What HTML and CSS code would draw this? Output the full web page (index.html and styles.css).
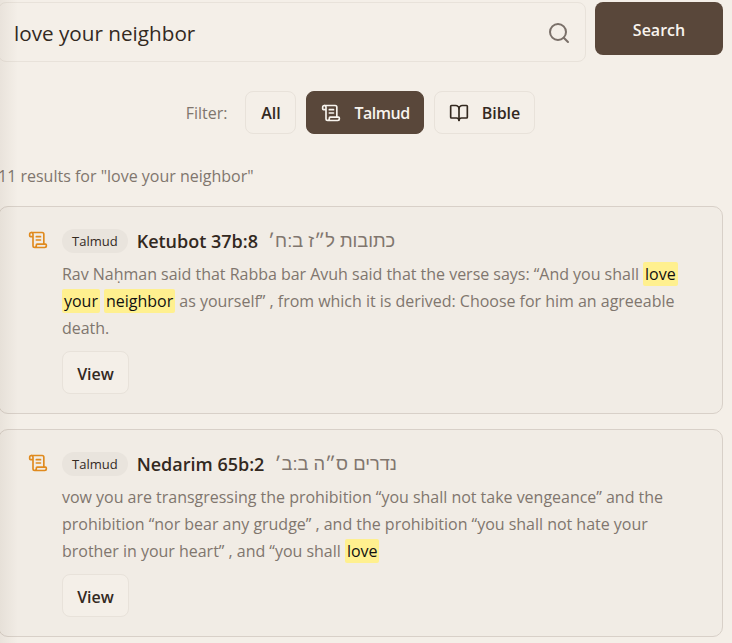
FILE: index.html
```html
<!DOCTYPE html>
<html>
    <head>
        <title>Search</title>
        <link rel="stylesheet" href="styles.css">
    </head>
    <body>
        <div class="edgeShade"></div>
        <main class="page">
            <form class="searchRow">
                <div class="searchBox">
                    <span class="searchText">love your neighbor</span>
                    <svg class="searchIcon" width="24" height="24" viewBox="0 0 24 24" fill="none" stroke="currentColor" stroke-width="2" stroke-linecap="round"><circle cx="11" cy="11" r="8"/><path d="m21 21-4.3-4.3"/></svg>
                </div>
                <button type="button" class="searchBtn">Search</button>
            </form>

            <div class="filterRow">
                <span class="filterLabel">Filter:</span>
                <button type="button" class="filterBtn wide">All</button>
                <button type="button" class="filterBtn active">
                    <svg width="20" height="20" viewBox="0 0 24 24" fill="none" stroke="currentColor" stroke-width="2" stroke-linecap="round" stroke-linejoin="round"><path d="M15 12h-5"/><path d="M15 8h-5"/><path d="M19 17V5a2 2 0 0 0-2-2H4"/><path d="M8 21h12a2 2 0 0 0 2-2v-1a1 1 0 0 0-1-1H11a1 1 0 0 0-1 1v1a2 2 0 1 1-4 0V5a2 2 0 1 0-4 0v2a1 1 0 0 0 1 1h3"/></svg>
                    Talmud
                </button>
                <button type="button" class="filterBtn">
                    <svg width="20" height="20" viewBox="0 0 24 24" fill="none" stroke="currentColor" stroke-width="2" stroke-linecap="round" stroke-linejoin="round"><path d="M12 7v14"/><path d="M3 18a1 1 0 0 1-1-1V4a1 1 0 0 1 1-1h5a4 4 0 0 1 4 4 4 4 0 0 1 4-4h5a1 1 0 0 1 1 1v13a1 1 0 0 1-1 1h-6a3 3 0 0 0-3 3 3 3 0 0 0-3-3z"/></svg>
                    Bible
                </button>
            </div>

            <p class="resultCount">11 results for "love your neighbor"</p>

            <article class="card">
                <svg class="cardIcon" width="20" height="20" viewBox="0 0 24 24" fill="none" stroke="currentColor" stroke-width="2" stroke-linecap="round" stroke-linejoin="round"><path d="M15 12h-5"/><path d="M15 8h-5"/><path d="M19 17V5a2 2 0 0 0-2-2H4"/><path d="M8 21h12a2 2 0 0 0 2-2v-1a1 1 0 0 0-1-1H11a1 1 0 0 0-1 1v1a2 2 0 1 1-4 0V5a2 2 0 1 0-4 0v2a1 1 0 0 0 1 1h3"/></svg>
                <div class="cardBody">
                    <div class="cardHead">
                        <span class="tag">Talmud</span>
                        <h3 class="ref">Ketubot 37b:8</h3>
                        <span class="refHe" dir="rtl">כתובות ל״ז ב:ח׳</span>
                    </div>
                    <p class="snippet">Rav Naḥman said that Rabba bar Avuh said that the verse says: “And you shall <mark>love</mark> <mark>your</mark> <mark>neighbor</mark> as yourself” , from which it is derived: Choose for him an agreeable death.</p>
                    <button type="button" class="viewBtn">View</button>
                </div>
            </article>

            <article class="card">
                <svg class="cardIcon" width="20" height="20" viewBox="0 0 24 24" fill="none" stroke="currentColor" stroke-width="2" stroke-linecap="round" stroke-linejoin="round"><path d="M15 12h-5"/><path d="M15 8h-5"/><path d="M19 17V5a2 2 0 0 0-2-2H4"/><path d="M8 21h12a2 2 0 0 0 2-2v-1a1 1 0 0 0-1-1H11a1 1 0 0 0-1 1v1a2 2 0 1 1-4 0V5a2 2 0 1 0-4 0v2a1 1 0 0 0 1 1h3"/></svg>
                <div class="cardBody">
                    <div class="cardHead">
                        <span class="tag">Talmud</span>
                        <h3 class="ref">Nedarim 65b:2</h3>
                        <span class="refHe" dir="rtl">נדרים ס״ה ב:ב׳</span>
                    </div>
                    <p class="snippet">vow you are transgressing the prohibition “you shall not take vengeance” and the prohibition “nor bear any grudge” , and the prohibition “you shall not hate your brother in your heart” , and “you shall <mark>love</mark></p>
                    <button type="button" class="viewBtn">View</button>
                </div>
            </article>
        </main>
    </body>
</html>
```

FILE: styles.css
```css
html, body {
    margin: 0;
    height: 643px;
    overflow: hidden;
}
body {
    background-color: #f4efe8;
    color: #33291f;
    font-family: "Open Sans", "Noto Sans", sans-serif;
}
button {
    font-family: inherit;
    cursor: pointer;
}
.edgeShade {
    position: absolute;
    top: 0;
    left: 0;
    width: 18px;
    height: 643px;
    pointer-events: none;
    z-index: 2;
    background-image: linear-gradient(to right, rgba(90, 70, 50, 0.07), rgba(90, 70, 50, 0));
}
.page {
    margin-left: -2px;
    margin-right: 9px;
    padding-top: 2px;
}
.searchRow {
    display: flex;
    align-items: flex-start;
    gap: 9px;
}
.searchBox {
    flex: 1;
    height: 60px;
    box-sizing: border-box;
    display: flex;
    align-items: center;
    justify-content: space-between;
    padding: 1px 14px 0 15px;
    border: 1px solid #e8e2da;
    border-radius: 8px;
}
.searchText {
    font-size: 20.7px;
}
.searchIcon {
    color: #7a7069;
}
.searchBtn {
    width: 128px;
    height: 53px;
    padding-top: 3px;
    border: none;
    border-radius: 8px;
    background-color: #59473a;
    color: #f8f4ee;
    font-size: 16px;
    font-weight: 600;
}
.filterRow {
    display: flex;
    align-items: center;
    justify-content: center;
    gap: 10px;
    margin-top: 29px;
}
.filterLabel {
    margin-right: 8px;
    color: #80766e;
    font-size: 16px;
}
.filterBtn {
    display: flex;
    align-items: center;
    gap: 13px;
    height: 43px;
    box-sizing: border-box;
    padding: 0 14px;
    border: 1px solid #e8e2da;
    border-radius: 8px;
    background: transparent;
    color: #33291f;
    font-size: 16px;
    font-weight: 600;
}
.filterBtn.wide {
    width: 51px;
    justify-content: center;
    padding: 0;
}
.filterBtn.active {
    padding-right: 13px;
    border-color: #59473a;
    background-color: #59473a;
    color: #f8f4ee;
    letter-spacing: -0.5px;
}
.resultCount {
    margin: 31px 0 19px;
    color: #80766e;
    font-size: 16px;
    line-height: 22px;
}
.card {
    display: flex;
    gap: 14px;
    height: 208px;
    box-sizing: border-box;
    margin-bottom: 15px;
    padding: 22px 20px 0 29px;
    border: 1px solid #d8d0c8;
    border-radius: 10px;
    background-color: #f1ece5;
}
.cardIcon {
    flex: none;
    margin-top: 1px;
    color: #e08a1e;
}
.cardBody {
    flex: 1;
}
.cardHead {
    display: flex;
    align-items: center;
    gap: 9px;
    height: 24px;
}
.tag {
    padding: 1px 10px;
    border-radius: 12px;
    background-color: #e9e4dd;
    font-size: 13px;
    line-height: 22px;
}
.ref {
    margin: 0;
    font-size: 18px;
    font-weight: 600;
}
.refHe {
    margin-left: 1px;
    color: #80766e;
    font-size: 18.3px;
    font-family: "Liberation Sans", sans-serif;
}
.snippet {
    margin: 8px 0;
    color: #80766e;
    font-size: 16px;
    line-height: 27.2px;
    letter-spacing: -0.02px;
}
mark {
    padding: 1px 2px;
    border-radius: 2px;
    background-color: #fff08f;
    color: #111;
}
.viewBtn {
    width: 67px;
    height: 43px;
    padding-top: 4px;
    border: 1px solid #e8e2da;
    border-radius: 8px;
    background-color: #f4efe8;
    color: #33291f;
    font-size: 16px;
    font-weight: 600;
}
```
